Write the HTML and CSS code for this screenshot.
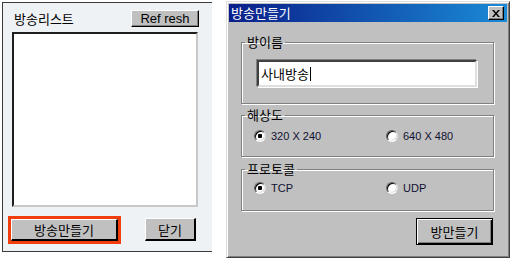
FILE: index.html
```html
<!DOCTYPE html>
<html lang="ko">
<head>
    <meta charset="UTF-8">
    <meta name="viewport" content="width=device-width, initial-scale=1.0">
    <title>방송만들기</title>
    <link rel="stylesheet" href="styles.css">
</head>
<body>
    <div class="screen">
        <div class="list-panel">
            <div class="panel-head">
                <span class="caption">방송리스트</span>
                <button class="btn btn-refresh">Ref resh</button>
            </div>
            <div class="listbox"></div>
            <div class="panel-foot">
                <div class="focus-ring">
                    <button class="btn btn-make">방송만들기</button>
                </div>
                <button class="btn btn-close">닫기</button>
            </div>
        </div>

        <div class="dialog">
            <div class="titlebar">
                <span class="title">방송만들기</span>
                <button class="title-x">
                    <svg width="8" height="7" viewBox="0 0 8 7">
                        <path d="M0 0h2l2 2.5 2-2.5h2l-3 3.5 3 3.5h-2l-2-2.5-2 2.5h-2l3-3.5z" fill="#000"/>
                    </svg>
                </button>
            </div>
            <div class="dialog-body">
                <fieldset class="group g-name">
                    <legend>방이름</legend>
                    <div class="group-inner">
                        <div class="textbox">사내방송<span class="caret"></span></div>
                    </div>
                </fieldset>
                <fieldset class="group g-res">
                    <legend>해상도</legend>
                    <div class="group-inner radios">
                        <label class="radio"><span class="dot checked"></span>320 X 240</label>
                        <label class="radio"><span class="dot"></span>640 X 480</label>
                    </div>
                </fieldset>
                <fieldset class="group g-proto">
                    <legend>프로토콜</legend>
                    <div class="group-inner radios">
                        <label class="radio"><span class="dot checked"></span>TCP</label>
                        <label class="radio"><span class="dot"></span>UDP</label>
                    </div>
                </fieldset>
                <div class="dialog-foot">
                    <button class="btn btn-default">방만들기</button>
                </div>
            </div>
        </div>
    </div>
</body>
</html>
```

FILE: styles.css
```css
html, body {
    margin: 0;
    padding: 0;
    background-color: #fff;
}
.screen {
    display: flex;
    align-items: flex-start;
    width: 513px;
    height: 260px;
    font-family: "Noto Sans CJK KR", "Liberation Sans", sans-serif;
    font-size: 13px;
    color: #000;
}

/* left panel */
.list-panel {
    box-sizing: border-box;
    width: 210px;
    height: 250px;
    margin: 2px 0 0 2px;
    padding: 7px 13px 0 9px;
    background-color: #eef2f5;
    border: 1px solid #3c3c3c;
    border-right: none;
}
.panel-head {
    display: flex;
    justify-content: space-between;
    align-items: center;
    height: 17px;
}
.caption {
    margin-left: 2px;
    line-height: 17px;
}
.btn {
    box-sizing: border-box;
    padding: 0;
    margin: 0;
    background-color: #c0c0c0;
    border: 1px solid;
    border-color: #fff #000 #000 #fff;
    box-shadow: inset -1px -1px 0 #808080;
    font-family: "Noto Sans CJK KR", "Liberation Sans", sans-serif;
    font-size: 13px;
    color: #000;
    line-height: 1;
}
.btn-refresh {
    width: 68px;
    height: 17px;
    font-family: "Liberation Sans", sans-serif;
    font-size: 13px;
}
.listbox {
    box-sizing: border-box;
    width: 186px;
    height: 175px;
    margin-top: 5px;
    background-color: #fff;
    border: 2px solid;
    border-color: #1e1e1e #c8c8c8 #c8c8c8 #1e1e1e;
}
.panel-foot {
    display: flex;
    align-items: flex-start;
    margin-top: 9px;
}
.focus-ring {
    margin-left: -4px;
    border: 3px solid #f23d0d;
    display: flex;
}
.btn-make {
    width: 107px;
    height: 22px;
    border-width: 1px 2px 2px 1px;
    box-shadow: none;
}
.btn-close {
    width: 51px;
    height: 23px;
    margin: 2px 0 0 24px;
    border-width: 1px 2px 2px 1px;
    box-shadow: none;
}

/* dialog */
.dialog {
    box-sizing: border-box;
    width: 284px;
    height: 257px;
    margin: 1px 0 0 14px;
    padding: 2px;
    background-color: #c0c0c0;
    border: 1px solid;
    border-color: #dfdfdf #404040 #404040 #dfdfdf;
    box-shadow: inset 1px 1px 0 #fff, inset -1px -1px 0 #808080;
}
.titlebar {
    display: flex;
    justify-content: space-between;
    align-items: center;
    height: 18px;
    padding: 0 3px 0 2px;
    background: linear-gradient(to right, #0a1f8a, #1a8ad6);
}
.title {
    color: #fff;
    font-size: 13px;
    line-height: 18px;
}
.title-x {
    box-sizing: border-box;
    display: flex;
    align-items: center;
    justify-content: center;
    width: 16px;
    height: 14px;
    padding: 0;
    background-color: #c0c0c0;
    border: 1px solid;
    border-color: #fff #000 #000 #fff;
    box-shadow: inset -1px -1px 0 #808080;
}
.dialog-body {
    padding: 12px 0 0 12px;
}
.group {
    box-sizing: border-box;
    width: 253px;
    margin: 0;
    padding: 0;
    min-inline-size: 0;
    border: 1px solid #808080;
    box-shadow: 1px 1px 0 #fff, inset 1px 1px 0 #fff;
}
.group legend {
    margin-left: 3px;
    padding: 0 2px;
    font-size: 13px;
    line-height: 16px;
}
.g-name {
    height: 70px;
}
.g-res {
    height: 50px;
    margin-top: 3px;
}
.g-proto {
    height: 50px;
    margin-top: 4px;
}
.group-inner {
    padding-left: 15px;
}
.g-name .group-inner {
    padding-top: 10px;
}
.g-res .group-inner {
    padding-top: 7px;
}
.g-proto .group-inner {
    padding-top: 5px;
}
.textbox {
    box-sizing: border-box;
    display: flex;
    align-items: center;
    width: 220px;
    height: 27px;
    padding-left: 2px;
    background-color: #fff;
    border: 2px solid;
    border-color: #404040 #dfdfdf #dfdfdf #404040;
    box-shadow: -1px -1px 0 #808080, 1px 1px 0 #fff;
    font-size: 13px;
}
.caret {
    width: 1px;
    height: 14px;
    margin-left: 1px;
    background-color: #000;
}
.radios {
    display: grid;
    grid-template-columns: 132px 1fr;
    padding-left: 12px;
}
.radio {
    display: flex;
    align-items: center;
    height: 12px;
    font-family: "Liberation Sans", sans-serif;
    font-size: 11px;
    color: #101030;
}
.dot {
    box-sizing: border-box;
    width: 12px;
    height: 12px;
    margin-right: 5px;
    border-radius: 50%;
    background-color: #fff;
    border: 1px solid;
    border-color: #606060 #e0e0e0 #fff #606060;
    box-shadow: inset 1px 1px 0 #000, inset -1px -1px 0 #dfdfdf;
}
.dot.checked {
    background: radial-gradient(circle, #000 0, #000 2px, #fff 2.5px);
}
.dialog-foot {
    display: flex;
    justify-content: flex-end;
    width: 252px;
    margin-top: 7px;
}
.btn-default {
    width: 77px;
    height: 27px;
    border: 1px solid #000;
    box-shadow: inset 1px 1px 0 #fff, inset -1px -1px 0 #000, inset -2px -2px 0 #808080;
}
```
